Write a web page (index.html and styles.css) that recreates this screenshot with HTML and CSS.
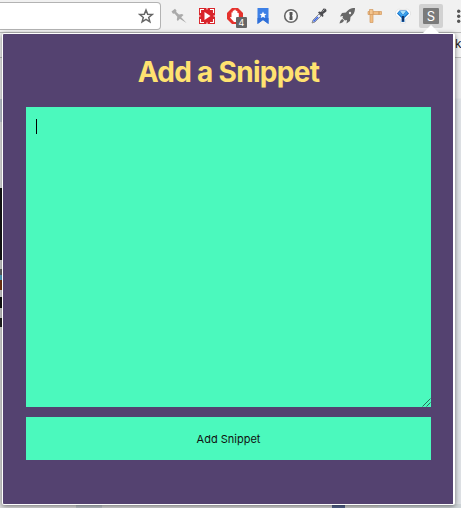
FILE: index.html
```html
<!DOCTYPE html>
<html lang="en">
<head>
<meta charset="utf-8">
<title>Add a Snippet</title>
<link rel="stylesheet" href="styles.css">
</head>
<body>
<div class="browser">
  <header class="toolbar">
    <div class="address">
      <svg width="16" height="16" viewBox="0 0 16 16"><path d="M8 2l1.700 4.200 4.500.3-3.500 2.900 1.200 4.400L8 11.400l-3.900 2.400 1.200-4.400-3.500-2.900 4.500-.3z" fill="none" stroke="#666" stroke-width="1.500"/></svg>
    </div>
    <div class="icons">
      <svg viewBox="0 0 16 16"><path d="M.5 3.500L4 .8l1.500 1.700-.3 1.500L8 6.500l3-.5 1.500 1-2.300 2.300L15.500 15 8.800 10.700 6.800 13l-1-1.300.5-3L3.500 5.500 2 5.800z" fill="#aaa"/></svg>
      <svg viewBox="0 0 16 16"><path d="M0 0h16v16H0z" fill="#d9252b"/><path d="M1.500 5V1.500H5M11 1.500h3.500V5M14.500 11v3.500H11M5 14.500H1.500V11" fill="none" stroke="#fff" stroke-width="1.100"/><path d="M0 8h1.500M14.500 8H16M8 0v1.500M8 14.500V16" stroke="#fff"/><path d="M5.500 4l6 4-6 4z" fill="#fff"/></svg>
      <span class="badged">
        <svg viewBox="0 0 16 16"><path d="M5 0h6l5 5v6l-5 5H5l-5-5V5z" fill="#e5322d"/><path d="M4.500 4.500q1-.8 1.200.5V3q1-1 1.500 0V2q1-1 1.600 0v1q1-.8 1.600.3V5q1-.8 1.400.4V10l-2 4H7L3 9.500q.3-1 1.500-.3z" fill="#fff"/></svg>
        <b class="badge">4</b>
      </span>
      <svg viewBox="0 0 16 16"><path d="M2.500 0h11v16L8 12l-5.500 4z" fill="#3d80e6"/><path d="M2.500 10h11v6L8 12l-5.500 4z" fill="#2f6fd8"/><path d="M8 3.500l1 2.300 2.500.2-1.900 1.600.6 2.400L8 8.700 5.800 10l.6-2.400L4.500 6 7 5.800z" fill="#fff"/></svg>
      <svg viewBox="0 0 16 16"><circle cx="8" cy="8" r="6.300" fill="#f7f7f7" stroke="#666" stroke-width="1.600"/><path d="M6.500 4h3v3l-.6.8.6.700V12h-3V8.800l.6-.8-.6-.8z" fill="#555"/></svg>
      <svg viewBox="0 0 16 16"><path d="M1 15l1-3 6-6 2 2-6 6z" fill="#e8edff" stroke="#777" stroke-width=".8"/><path d="M2.500 13.500L7 9" stroke="#4169e1" stroke-width="1.700"/><path d="M7 4.500l1.200-1L10 4l2.500-3.500 2 .2 1 1.300-.2 1.500L12 6l.5 2-1 1z" fill="#4c4c50"/><path d="M11.500 3.500l2-2" stroke="#aaa"/></svg>
      <svg viewBox="0 0 16 16"><path d="M16 0c-5 0-7 2-9 4.500L3 5 1 8.500l3-.5-.5 2 2.500 2.500 2-.5-.5 3.500L11 13l.5-4C14 7 16 5 16 0z" fill="#686868"/><circle cx="11" cy="5" r="1.200" fill="#eee"/><path d="M3.500 11C1.500 12 1 13 .5 15.500 3 15 4 14.500 5 12.500z" fill="#686868"/></svg>
      <svg viewBox="0 0 16 16"><path d="M3 4h3v10.500H3zM1 3.500h13.500v3H1z" fill="#f1bd83" stroke="#d19a60" stroke-width=".7"/><path d="M2.500 1.500h3.500v5H2.500z" fill="#f3c590" stroke="#d19a60" stroke-width=".7"/><path d="M12 3.500v3" stroke="#c58f56"/></svg>
      <svg viewBox="0 0 16 16"><path d="M3.500 1L.5 4v3l5 4.500V15h5v-3.500l5-4.500V4l-3-3L8 2z" fill="#fff" stroke="#ddd" stroke-width=".7"/><path d="M4.500 2.500h7L14 5.500 9.500 10v4h-3v-4L2 5.500z" fill="#176fc5"/><path d="M5 3h6L8 7z" fill="#a9e0fb"/><path d="M4.500 3L8 7.500 11.500 3 13 5.300 8 9.500 3 5.300z" fill="#3ba3ee"/><path d="M8 8v5.500" stroke="#12366a" stroke-width="2"/></svg>
      <span class="active"><span class="letter">S</span></span>
      <svg class="more" viewBox="0 0 16 16"><g fill="#555"><circle cx="7.700" cy="3.300" r="1.700"/><circle cx="7.700" cy="8.300" r="1.700"/><circle cx="7.700" cy="13.300" r="1.700"/></g></svg>
    </div>
  </header>
  <div class="bookmarks">k</div>
  <main class="page">
    <div class="left-edge"></div>
    <div class="bottom-edge"></div>
  </main>
</div>
<section class="popup">
  <h1>Add a Snippet</h1>
  <div class="field">
    <span class="caret"></span>
    <svg class="grip" width="9" height="9" viewBox="0 0 9 9"><path d="M.5 8.500l8-8M4.500 8.500l4-4" stroke="#28705a" stroke-width="1"/></svg>
  </div>
  <button type="button">Add Snippet</button>
</section>
</body>
</html>
```
FILE: styles.css
```css
* { box-sizing: border-box; }
body {
  margin: 0;
  width: 461px;
  height: 508px;
  overflow: hidden;
  position: relative;
  font-family: Inter, "Liberation Sans", sans-serif;
}
.browser {
  height: 508px;
  display: flex;
  flex-direction: column;
  background: #f1f1f1;
}
.toolbar {
  height: 33px;
  flex: none;
  display: flex;
  padding-top: 2px;
  border-bottom: 1px solid #bbb;
}
.address {
  width: 161px;
  height: 28px;
  flex: none;
  display: flex;
  justify-content: flex-end;
  align-items: center;
  padding-right: 6px;
  background: #fff;
  border: 1px solid #b3b3b3;
  border-left: 0;
  border-radius: 0 4px 4px 0;
}
.icons {
  display: flex;
  align-items: flex-start;
  gap: 12px;
  padding: 6px 0 0 10px;
}
.icons svg {
  width: 16px;
  height: 16px;
  flex: none;
  display: block;
}
.badged { position: relative; }
.badge {
  position: absolute;
  left: 9px;
  top: 9px;
  width: 11px;
  height: 11px;
  background: #666;
  color: #fff;
  font: 9px/11px Inter, sans-serif;
  text-align: center;
  border-radius: 1px;
}
.active {
  width: 24px;
  height: 24px;
  margin: -4px -4px 0;
  padding: 4px;
  flex: none;
  background: #d2d2d2;
  border-radius: 2px;
}
.letter {
  display: block;
  width: 16px;
  height: 16px;
  background: #7b7b7b;
  color: #fff;
  font-size: 13px;
  line-height: 16px;
  text-align: center;
  border-radius: 1px;
}
.bookmarks {
  height: 25px;
  flex: none;
  padding-left: 455px;
  font-size: 12px;
  line-height: 22px;
  color: #222;
  border-bottom: 1px solid #bbb;
}
.page {
  flex: 1;
  display: flex;
  flex-direction: column;
  background: linear-gradient(#e9e9eb 0 40px, #dde0e4 41px);
}
.left-edge {
  width: 2px;
  flex: 1;
  background: linear-gradient(#eee 0 41px, #c4cbd5 41px 64px, #e6e6e6 64px 130px, #151515 130px 202px, #d0d0d0 202px 211px, #666 211px 217px, #54a8cb 217px 222px, #7b3713 222px 232px, #d5d5d5 232px 239px, #111 239px 250px, #ccc 250px 260px, #222 260px 269px, #ddd 269px);
}
.bottom-edge {
  height: 4px;
  flex: none;
  background: linear-gradient(90deg, #ddd 0 76px, #bfc5ca 76px 102px, #d8d8d8 102px 332px, #55658e 332px 345px, #d1d2d0 345px 378px, #ced4d7 378px);
}
.popup {
  position: absolute;
  left: 2px;
  top: 33px;
  width: 453px;
  height: 472px;
  padding: 20px 22px 0 23px;
  background: #544270;
  border: 1px solid #fff;
  border-right-width: 2px;
  border-radius: 2px;
  box-shadow: 0 1px 5px rgba(0, 0, 0, .5);
}
.popup::before {
  content: "";
  position: absolute;
  left: 420px;
  top: -9px;
  border: solid transparent;
  border-width: 0 8px 8px;
  border-bottom-color: #fff;
}
h1 {
  margin: 0 0 18px;
  padding-top: 1px;
  color: #ffe270;
  font-size: 28px;
  line-height: 34px;
  font-weight: 700;
  letter-spacing: -.7px;
  text-align: center;
  white-space: nowrap;
}
.field {
  height: 300px;
  margin-bottom: 10px;
  padding: 12px 10px;
  position: relative;
  background: #4bf9bd;
}
.caret {
  display: block;
  width: 1px;
  height: 15px;
  background: #000;
}
.grip {
  position: absolute;
  right: 0;
  bottom: 0;
}
button {
  display: block;
  width: 100%;
  height: 43px;
  margin: 0;
  padding: 1px 0 0;
  border: 0;
  background: #4bf9bd;
  color: #111;
  font: 11px Inter, sans-serif;
  text-align: center;
}
```
